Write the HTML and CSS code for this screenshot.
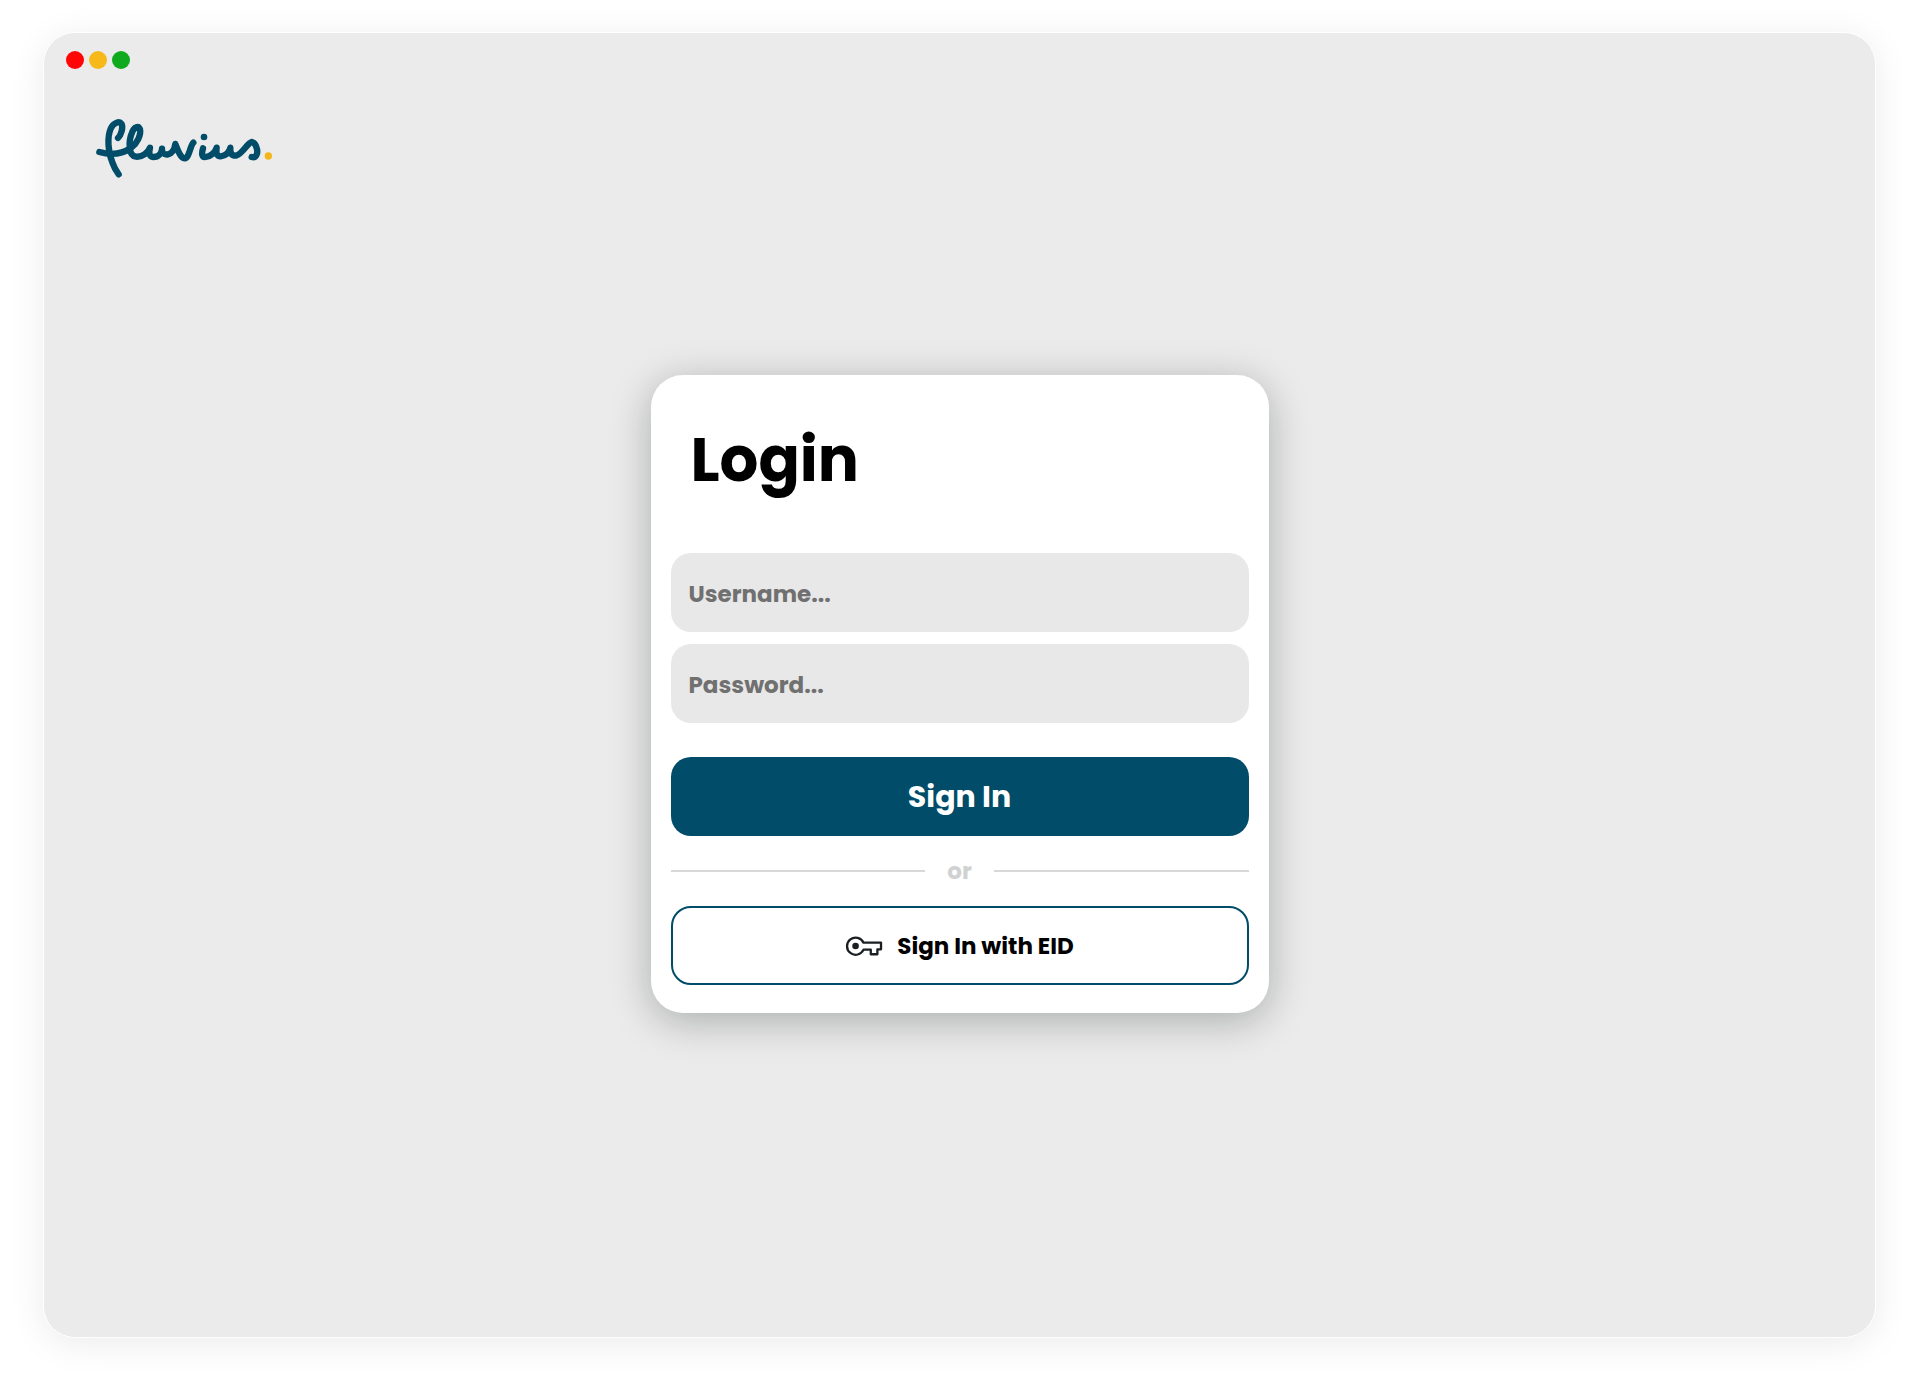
FILE: index.html
```html
<!DOCTYPE html>
<html lang="en">
<head>
  <meta charset="UTF-8">
  <meta name="viewport" content="width=device-width, initial-scale=1.0">
  <title>Fluvius - Login</title>
  <link rel="stylesheet" href="styles.css">
</head>
<body>
  <div class="window">
    <header class="header">
      <div class="dots">
        <span class="dot red"></span>
        <span class="dot yellow"></span>
        <span class="dot green"></span>
      </div>
      <svg class="logo" viewBox="40 36 540 186" role="img" aria-label="fluvius.">
        <g fill="none" stroke="#004c69" stroke-width="19" stroke-linecap="round" stroke-linejoin="round">
          <path d="M112 99C121 91 128 68 123 57C116 47 98 53 90 71C79 97 82 141 95 172C101 189 107 199 114 208"/>
          <path d="M56 141C88 150 124 147 151 129C169 116 182 89 178 73C173 61 162 66 155 80C143 107 142 152 166 155C186 157 203 142 208 128C204 145 206 155 218 156C234 156 243 144 244 131C244 145 250 150 262 148C275 145 282 130 284 117C290 130 298 160 313 160C325 160 329 121 338 113"/>
          <path d="M367 130C362 148 364 158 375 156C392 153 404 142 408 128C406 145 408 154 420 154C438 152 446 142 449 128C448 145 453 153 466 152C485 148 500 113 514 111C525 114 532 134 529 146C526 156 520 158 513 156"/>
        </g>
        <circle cx="370" cy="96" r="10" fill="#004c69"/>
        <circle cx="563" cy="153" r="11" fill="#f3b61a"/>
      </svg>
    </header>

    <main class="main">
      <form class="card">
        <h1>Login</h1>
        <div class="fields">
          <input class="field" type="text" placeholder="Username..." aria-label="Username">
          <input class="field" type="password" placeholder="Password..." aria-label="Password">
        </div>
        <button class="btn primary-btn" type="submit">Sign In</button>
        <div class="divider">or</div>
        <button class="btn eid-btn" type="button">
          <svg class="key" viewBox="46 45 115 64" aria-hidden="true">
            <path d="M102 67H155V87H144V102H124V88H102A26 26 0 1 1 102 67Z" fill="none" stroke="#1b1f22" stroke-width="7" stroke-linejoin="round"/>
            <circle cx="78" cy="77" r="10" fill="#1b1f22"/>
          </svg>
          Sign In with EID
        </button>
      </form>
    </main>
  </div>
</body>
</html>
```
FILE: styles.css
```css
* { margin:0; padding:0; box-sizing:border-box; }
body {
  min-height:100vh; display:flex; padding:32px 44px 52px 43px;
  background:#fff; font-family: Poppins, Inter, sans-serif; font-weight:700;
}

/* Window */
.window {
  flex:1; display:grid; background:#ebebeb;
  border:1px solid #fff; border-radius:32px;
  box-shadow:0 6px 36px rgba(0,0,0,0.08);
}
/* header and main share one cell so the card stays centred */
.header, .main { grid-area:1 / 1; }
.header { padding:18px 22px; align-self:start; }
.dots { display:flex; gap:5px; }
.dot { width:18px; height:18px; border-radius:50%; }
.red { background:#ff0505; }
.yellow { background:#f6b919; }
.green { background:#10aa1f; }
.logo { display:block; width:180px; height:62px; margin:48px 0 0 28px; }

/* Login card */
.main { display:flex; justify-content:center; align-items:center; padding-top:18px; }
.card {
  width:100%; max-width:618px; padding:48px 20px 28px;
  background:#fff; border-radius:32px;
  box-shadow:0 8px 40px rgba(0,10,10,0.28);
}
h1 { font-size:61px; line-height:74px; margin-bottom:56px; padding-left:20px; }
.fields { display:flex; flex-direction:column; gap:12px; margin-bottom:34px; }
.field, .btn { width:100%; height:79px; border-radius:20px; font-family:inherit; font-weight:700; }
.field { padding:2px 18px 0; border:0; background:#e8e8e8; font-size:23px; color:#222; }
.field::placeholder { color:#707070; opacity:1; }
.btn { display:flex; justify-content:center; align-items:center; gap:14px; cursor:pointer; }
.primary-btn { border:0; background:#004c69; color:#fff; font-size:30px; }
.eid-btn { border:2px solid #004c69; background:#fff; color:#000; font-size:23px; }
.key { width:38px; height:22px; }
.divider {
  display:flex; align-items:center; gap:22px; height:70px;
  font-size:23px; color:#d0d2d2;
}
.divider::before, .divider::after { content:""; flex:1; height:2px; background:#d8d8d8; }
```
